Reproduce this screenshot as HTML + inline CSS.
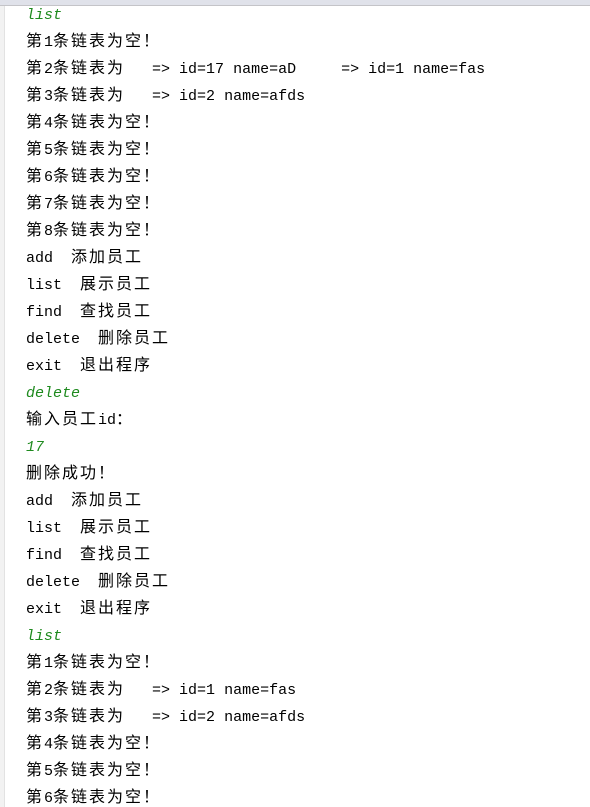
<!DOCTYPE html>
<html><head><meta charset="utf-8"><style>
html,body{margin:0;padding:0;background:#fff;width:590px;height:807px;overflow:hidden;position:relative}
.top{position:absolute;left:0;top:0;width:590px;height:5px;background:#e0e2ea;border-bottom:1px solid #c4c4c8;z-index:2}
.gut{position:absolute;left:0;top:6px;width:4px;height:801px;background:#f2f2f2;border-right:1px solid #e2e2e2}
.c{position:absolute;left:26px;top:2px;font-family:"Liberation Mono","Noto Sans CJK SC",monospace;font-size:15px;line-height:27px;color:#000}
.c div{height:27px;white-space:pre;overflow:hidden}
.g{color:#1e8a1e;font-style:italic}
.k{font-family:"Noto Sans CJK SC","WenQuanYi Zen Hei",sans-serif;font-size:16px;letter-spacing:2px;line-height:0}
</style></head><body>
<div class="top"></div><div class="gut"></div>
<div class="c"><div class="g">list</div><div><span class="k">第</span>1<span class="k">条链表为空！</span></div><div><span class="k">第</span>2<span class="k">条链表为</span>   => id=17 name=aD     => id=1 name=fas</div><div><span class="k">第</span>3<span class="k">条链表为</span>   => id=2 name=afds</div><div><span class="k">第</span>4<span class="k">条链表为空！</span></div><div><span class="k">第</span>5<span class="k">条链表为空！</span></div><div><span class="k">第</span>6<span class="k">条链表为空！</span></div><div><span class="k">第</span>7<span class="k">条链表为空！</span></div><div><span class="k">第</span>8<span class="k">条链表为空！</span></div><div>add  <span class="k">添加员工</span></div><div>list  <span class="k">展示员工</span></div><div>find  <span class="k">查找员工</span></div><div>delete  <span class="k">删除员工</span></div><div>exit  <span class="k">退出程序</span></div><div class="g">delete</div><div><span class="k">输入员工</span>id<span class="k">：</span></div><div class="g">17</div><div><span class="k">删除成功！</span></div><div>add  <span class="k">添加员工</span></div><div>list  <span class="k">展示员工</span></div><div>find  <span class="k">查找员工</span></div><div>delete  <span class="k">删除员工</span></div><div>exit  <span class="k">退出程序</span></div><div class="g">list</div><div><span class="k">第</span>1<span class="k">条链表为空！</span></div><div><span class="k">第</span>2<span class="k">条链表为</span>   => id=1 name=fas</div><div><span class="k">第</span>3<span class="k">条链表为</span>   => id=2 name=afds</div><div><span class="k">第</span>4<span class="k">条链表为空！</span></div><div><span class="k">第</span>5<span class="k">条链表为空！</span></div><div><span class="k">第</span>6<span class="k">条链表为空！</span></div></div>
</body></html>
